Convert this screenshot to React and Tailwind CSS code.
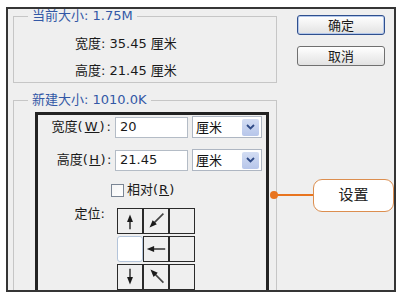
import React from 'react';

const font = "font-['DejaVu_Sans','Noto_Sans_CJK_SC',sans-serif]";

// small arrow drawn from tail (x1,y1) to head (x2,y2)
const Arrow = ({ x1, y1, x2, y2 }) => {
  const dx = x2 - x1;
  const dy = y2 - y1;
  const len = Math.hypot(dx, dy);
  const ux = dx / len;
  const uy = dy / len;
  const hl = 8;
  const hw = 3.2;
  const bx = x2 - ux * hl;
  const by = y2 - uy * hl;
  const pts = `${x2},${y2} ${bx - uy * hw},${by + ux * hw} ${bx + uy * hw},${by - ux * hw}`;
  return (
    <svg width="26" height="26" viewBox="0 0 26 26">
      <line x1={x1} y1={y1} x2={bx + ux} y2={by + uy} stroke="#444" strokeWidth="1.8" />
      <polygon points={pts} fill="#1a1a1a" />
    </svg>
  );
};

const Cell = ({ children, selected }) => (
  <div
    className={
      selected
        ? 'w-[26px] h-[26px] bg-white border border-[#b3c4da] rounded-[3px]'
        : 'w-[26px] h-[26px] bg-[#efefef] border border-[#2a2a2a] flex items-center justify-center'
    }
  >
    {children}
  </div>
);

const UnitSelect = () => (
  <div className="w-[70px] h-[22px] bg-white border border-[#aeb6c2] flex items-center justify-between pl-[3px] pr-[2px]">
    <span className="text-[13px] leading-none text-[#111]">厘米</span>
    <div className="w-[17px] h-[17px] rounded-[2px] bg-gradient-to-b from-[#d3ddf3] to-[#b7c6ea] flex items-center justify-center">
      <svg width="9" height="6" viewBox="0 0 9 6">
        <path d="M1 1 L4.5 4.5 L8 1" fill="none" stroke="#2f4a86" strokeWidth="1.8" />
      </svg>
    </div>
  </div>
);

const App = () => {
  return (
    <div className={`w-[403px] h-[292px] bg-white relative overflow-hidden text-[#1a1a1a] ${font}`}>
      {/* dialog frame */}
      <div className="ml-[6px] mt-[7px] w-[390px] h-[285px] border-2 border-[#353535] bg-[#efefef] overflow-hidden flex">
        {/* left column */}
        <div className="pl-[5px] w-[269px] shrink-0">
          <fieldset className="w-[264px] h-[74px] border border-[#c6c6c6]">
            <legend className="ml-[14px] px-[4px] text-[13px] leading-[14px] text-[#3358a6]">当前大小: 1.75M</legend>
            <div className="pt-[7px] pl-[61px] text-[13px]">
              <div className="h-[27px] flex items-center">宽度: 35.45 厘米</div>
              <div className="h-[27px] flex items-center">高度: 21.45 厘米</div>
            </div>
          </fieldset>

          <fieldset className="mt-[10px] w-[264px] h-[230px] border border-[#c6c6c6]">
            <legend className="ml-[14px] px-[4px] text-[13px] leading-[14px] text-[#3358a6]">新建大小: 1010.0K</legend>
            <div className="ml-[21px] mt-[5px] w-[234px] h-[190px] border-[3px] border-[#222]">
              <div className="pt-[1px] text-[13px]">
                <div className="flex items-center h-[22px]">
                  <div className="w-[75px] text-right">
                    宽度<span className="tracking-[2px]">(<span className="underline">W</span>):</span>
                  </div>
                  <div className="ml-[2px] w-[73px] h-[21px] bg-white border border-[#b4bcc6] flex items-center pl-[4px]">20</div>
                  <div className="ml-[4px]">
                    <UnitSelect />
                  </div>
                </div>
                <div className="flex items-center h-[22px] mt-[11px]">
                  <div className="w-[75px] text-right">
                    高度<span className="tracking-[1.5px]">(<span className="underline">H</span>):</span>
                  </div>
                  <div className="ml-[2px] w-[73px] h-[21px] bg-white border border-[#b4bcc6] flex items-center pl-[4px]">21.45</div>
                  <div className="ml-[4px]">
                    <UnitSelect />
                  </div>
                </div>
                <div className="flex items-center mt-[12px] ml-[73px] h-[14px]">
                  <div className="w-[13px] h-[13px] bg-gradient-to-br from-[#f4f4f4] to-white border border-[#7a8594]" />
                  <span className="ml-[3px]">
                    相对<span className="tracking-[1px]">(<span className="underline">R</span>)</span>
                  </span>
                </div>
                <div className="flex items-start mt-[11px]">
                  <div className="w-[75px] pr-[8px] text-right leading-[16px] -mt-[2px]">定位:</div>
                  <div className="ml-[4px] grid grid-cols-[26px_26px_26px] gap-y-[2px]">
                    <Cell>
                      <Arrow x1={13} y1={22} x2={13} y2={6} />
                    </Cell>
                    <Cell>
                      <Arrow x1={21} y1={5} x2={6} y2={20} />
                    </Cell>
                    <Cell />
                    <Cell selected />
                    <Cell>
                      <Arrow x1={23} y1={13} x2={3} y2={13} />
                    </Cell>
                    <Cell />
                    <Cell>
                      <Arrow x1={13} y1={4} x2={13} y2={21} />
                    </Cell>
                    <Cell>
                      <Arrow x1={21} y1={19} x2={7} y2={5} />
                    </Cell>
                    <Cell />
                  </div>
                </div>
              </div>
            </div>
          </fieldset>
        </div>

        {/* buttons */}
        <div className="ml-[20px] pt-[6px] flex flex-col gap-[11px] text-[13px]">
          <button className="w-[88px] h-[20px] rounded-[3px] border border-[#2f4f8e] shadow-[inset_0_0_0_1px_#b3c7ea] bg-gradient-to-b from-white to-[#e2e2e2] leading-none">
            确定
          </button>
          <button className="w-[88px] h-[20px] rounded-[3px] border border-[#707070] bg-gradient-to-b from-white to-[#e2e2e2] leading-none">
            取消
          </button>
        </div>
      </div>

      {/* callout */}
      <div className="absolute left-[270px] top-[191px] w-[8px] h-[8px] rounded-full bg-[#e8741f]" />
      <div className="absolute left-[275px] top-[194px] w-[39px] h-[2px] bg-[#e8741f]" />
      <div className="absolute left-[313px] top-[179px] w-[81px] h-[33px] rounded-[9px] border-[1.5px] border-[#dc8e4f] bg-white flex items-center justify-center text-[15px] text-[#222]">
        设置
      </div>
    </div>
  );
};

export default App;
